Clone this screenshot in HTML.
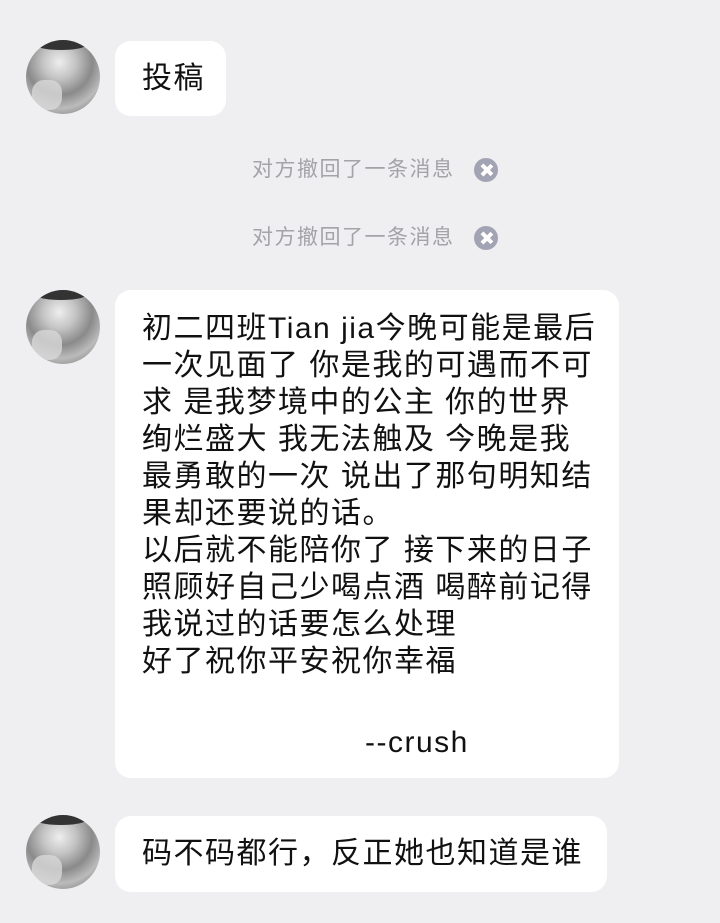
<!DOCTYPE html>
<html><head><meta charset="utf-8"><style>
body{margin:0;width:720px;height:923px;background:#efeff1;position:relative;overflow:hidden;font-family:"Liberation Sans","Noto Sans CJK SC",sans-serif;color:#111}
.av{position:absolute;left:26px;width:74px;height:74px;border-radius:50%;background:radial-gradient(circle at 45% 30%,#eee 0,#c4c4c4 25%,#8a8a8a 50%,#bbb 70%,#666 100%);overflow:hidden}
.av:before{content:"";position:absolute;left:10px;top:0;width:50px;height:10px;background:#333;border-radius:0 0 50% 50%}
.av:after{content:"";position:absolute;left:6px;top:40px;width:30px;height:30px;background:#d8d8d8;border-radius:40%;opacity:.8}
.b{position:absolute;left:115px;background:#fff;border-radius:16px;font-size:30px;letter-spacing:1.5px;white-space:nowrap}
.r{position:absolute;left:252px;font-size:21px;letter-spacing:1.5px;color:#a3a3a8;line-height:24px}
.x{position:absolute;left:474px;width:24px;height:24px;border-radius:50%;background:#a2a4b4}
.x:before,.x:after{content:"";position:absolute;left:10.5px;top:5px;width:3.5px;height:14px;background:#fff;transform:rotate(45deg)}
.x:after{transform:rotate(-45deg)}
</style></head><body>
<div class="av" style="top:40px"></div>
<div class="b" style="top:41px;width:111px;height:75px;line-height:75px;text-indent:27px">投稿</div>
<div class="r" style="top:158px">对方撤回了一条消息</div><div class="x" style="top:158px"></div>
<div class="r" style="top:226px">对方撤回了一条消息</div><div class="x" style="top:226px"></div>
<div class="av" style="top:290px"></div>
<div class="b" style="top:290px;width:504px;height:488px;box-sizing:border-box;padding:20px 0 0 27px;line-height:37px">初二四班Tian jia今晚可能是最后<br>一次见面了 你是我的可遇而不可<br>求 是我梦境中的公主 你的世界<br>绚烂盛大 我无法触及 今晚是我<br>最勇敢的一次 说出了那句明知结<br>果却还要说的话。<br>以后就不能陪你了 接下来的日子<br>照顾好自己少喝点酒 喝醉前记得<br>我说过的话要怎么处理<br>好了祝你平安祝你幸福<div style="margin-top:44px;padding-left:223px">--crush</div></div>
<div class="av" style="top:815px"></div>
<div class="b" style="top:816px;width:492px;height:76px;line-height:76px;text-indent:27px">码不码都行，反正她也知道是谁</div>
</body></html>
